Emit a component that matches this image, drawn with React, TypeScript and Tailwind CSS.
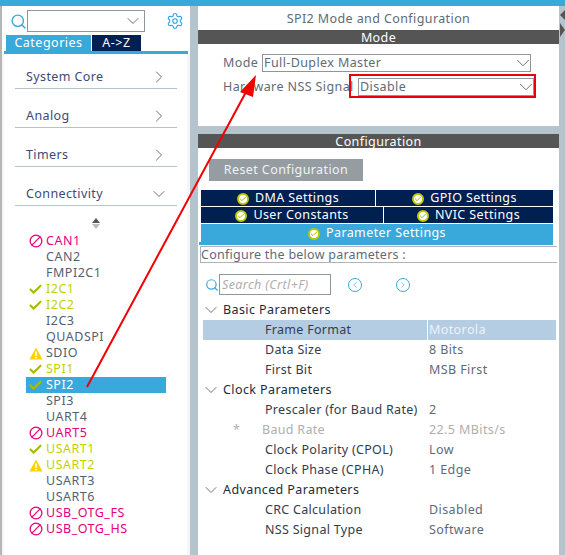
import { ChevronDown, ChevronRight, Search, Settings, Check, Ban, ChevronLeft } from "lucide-react";

const FONT = "font-['Noto_Sans',sans-serif]";

type PeripheralState = "none" | "ok" | "warn" | "ban";

const peripherals: { name: string; state: PeripheralState; color?: string; selected?: boolean }[] = [
  { name: "CAN1", state: "ban", color: "text-[#e6007e]" },
  { name: "CAN2", state: "none" },
  { name: "FMPI2C1", state: "none" },
  { name: "I2C1", state: "ok", color: "text-[#c3d100]" },
  { name: "I2C2", state: "ok", color: "text-[#c3d100]" },
  { name: "I2C3", state: "none" },
  { name: "QUADSPI", state: "none" },
  { name: "SDIO", state: "warn" },
  { name: "SPI1", state: "ok", color: "text-[#c3d100]" },
  { name: "SPI2", state: "ok", color: "text-white", selected: true },
  { name: "SPI3", state: "none" },
  { name: "UART4", state: "none" },
  { name: "UART5", state: "ban", color: "text-[#e6007e]" },
  { name: "USART1", state: "ok", color: "text-[#c3d100]" },
  { name: "USART2", state: "warn", color: "text-[#c3d100]" },
  { name: "USART3", state: "none" },
  { name: "USART6", state: "none" },
  { name: "USB_OTG_FS", state: "ban", color: "text-[#e6007e]" },
  { name: "USB_OTG_HS", state: "ban", color: "text-[#e6007e]" },
];

function StateIcon({ state }: { state: PeripheralState }) {
  if (state === "ok") return <Check size={15} strokeWidth={3.5} className="text-[#a9bd00]" />;
  if (state === "ban") return <Ban size={14} strokeWidth={2.2} className="text-[#e6007e] -scale-x-100" />;
  if (state === "warn")
    return (
      <svg width="14" height="13" viewBox="0 0 14 13">
        <path d="M7 0.5 L13.6 12.5 H0.4 Z" fill="#ffd200" />
        <rect x="6.2" y="4.5" width="1.6" height="4.5" fill="#fff" />
        <rect x="6.2" y="9.8" width="1.6" height="1.6" fill="#fff" />
      </svg>
    );
  return null;
}

function Category({ label, open, className }: { label: string; open?: boolean; className: string }) {
  return (
    <div className={`ml-[11px] w-[162px] border-b border-[#b5c3cc] flex items-center justify-between pl-[11px] pr-[8px] pb-[2px] text-[12.5px] tracking-[0.4px] text-[#3b4a78] ${className}`}>
      <span>{label}</span>
      {open ? (
        <ChevronDown size={20} strokeWidth={1} className="text-[#555] shrink-0 -mt-[2px]" />
      ) : (
        <ChevronRight size={20} strokeWidth={1} className="text-[#555] shrink-0 -mt-[2px]" />
      )}
    </div>
  );
}

function SelectBox({ value, className }: { value: string; className: string }) {
  return (
    <div className={`border border-[#8f959b] flex items-center justify-between pl-[1px] text-[12.5px] tracking-[0.4px] text-[#5f6a78] ${className}`}>
      <span>{value}</span>
      <ChevronDown size={22} strokeWidth={0.9} className="text-[#555] shrink-0 -mr-[4px]" />
    </div>
  );
}

function SettingTab({ label, className }: { label: string; className: string }) {
  return (
    <div className={`flex items-center justify-center gap-[6px] pt-[1px] text-white text-[12.5px] tracking-[0.4px] ${className}`}>
      <span className="w-[12px] h-[12px] rounded-full bg-white border-2 border-[#bcc900] flex items-center justify-center">
        <Check size={8} strokeWidth={3} className="text-[#a9bd00]" />
      </span>
      {label}
    </div>
  );
}

function Group({ label }: { label: string }) {
  return (
    <div className="h-5 flex items-center -ml-[2px] gap-[2px] text-[#222b3a]">
      <ChevronDown size={20} strokeWidth={1} className="text-[#555] shrink-0" />
      <span>{label}</span>
    </div>
  );
}

function ParamRow({ label, value, selected, muted }: { label: string; value: string; selected?: boolean; muted?: boolean }) {
  return (
    <div className={`h-5 flex items-center ${muted ? "text-[#b0aeae]" : "text-[#333c4c]"} ${selected ? "bg-[#b5cde3]" : ""}`}>
      <span className={`w-[224px] ${muted ? "pl-[59px]" : "pl-[62px]"} flex relative tracking-[0.3px]`}>
        {muted && <span className="absolute left-[30px]">*</span>}
        {label}
      </span>
      <span className={`flex-1 h-full flex items-center ${selected ? "border-l border-white pl-[1px] text-[#eef2f6]" : "pl-[2px] text-[#5f6a78]"} ${muted ? "text-[#b0aeae]" : ""}`}>{value}</span>
    </div>
  );
}

export default function App() {
  return (
    <div className={`w-[565px] h-[555px] overflow-hidden relative bg-white ${FONT}`}>
      <div className="h-[6px] bg-[#39a9dc]" />
      <div className="flex h-[549px]">
        {/* left panel */}
        <div className="w-[190px] border-l-2 border-[#b5b5b5] flex flex-col shrink-0">
          <div className="flex items-center h-[29px] pl-[8px] pt-[1px]">
            <Search size={17} strokeWidth={2} className="text-[#39a9dc] shrink-0" />
            <div className="w-[118px] h-[22px] border border-[#8f959b] flex items-center justify-end pr-[1px]">
              <ChevronDown size={20} strokeWidth={1} className="text-[#555]" />
            </div>
            <Settings size={18} strokeWidth={1.6} className="ml-[21px] text-[#39a9dc] shrink-0" />
          </div>
          <div className="flex pl-[4px] h-[16px] text-[12.5px] tracking-[0.5px] text-white">
            <div className="w-[85px] bg-[#39a9dc] text-center leading-[16px]">Categories</div>
            <div className="w-[49px] ml-[1px] bg-[#002052] text-center leading-[16px]">A-&gt;Z</div>
          </div>
          <div className="ml-[2px] w-[184px] h-[3px] bg-[#39a9dc]" />
          <div className="flex-1 bg-[#f6f6f6]">
            <div className="ml-[2px] w-[183px] h-full bg-white">
              <div className="pt-[15px] pb-[1px]">
                <Category label="System Core" className="h-[20px] mb-[19px]" />
                <Category label="Analog" className="h-[20px] mb-[19px]" />
                <Category label="Timers" className="h-[20px] mb-[19px]" />
                <Category label="Connectivity" open className="h-[20px]" />
              </div>
              <div className="ml-[88px] mt-[11px] mb-[4px] flex flex-col items-center w-[8px]">
                <span className="w-0 h-0 border-x-[4px] border-x-transparent border-b-[5px] border-b-[#555]" />
                <span className="mt-[1px] w-0 h-0 border-x-[4px] border-x-transparent border-t-[5px] border-t-[#bbb]" />
              </div>
              <div className="text-[12.5px] tracking-[0.5px] text-[#555f70]">
                {peripherals.map((p) => (
                  <div
                    key={p.name}
                    className={`ml-[22px] w-[140px] h-4 flex items-center ${p.selected ? "bg-[#39a9dc]" : ""} ${p.color ?? ""}`}
                  >
                    <span className="w-[20px] flex justify-center shrink-0 pr-[1px]">
                      <StateIcon state={p.state} />
                    </span>
                    <span>{p.name}</span>
                  </div>
                ))}
              </div>
            </div>
          </div>
        </div>

        {/* splitter */}
        <div className="w-[8px] bg-[#b5c3cc] shrink-0" />

        {/* right panel */}
        <div className="w-[361px] shrink-0 flex flex-col text-[12.5px] tracking-[0.4px]">
          <div className="h-[24px] text-center leading-[26px] text-[#5f6a78]">SPI2 Mode and Configuration</div>
          <div className="h-[14px] bg-[#545554] text-white text-center leading-[16px]">Mode</div>
          <div className="h-[82px] pt-[10px]">
            <div className="flex items-center h-[18px] pl-[25px] text-[#5f6a78]">
              <span className="w-[39px]">Mode</span>
              <SelectBox value="Full-Duplex Master" className="w-[269px] h-[18px]" />
            </div>
            <div className="flex items-center h-[18px] mt-[6px] pl-[25px] text-[#5f6a78]">
              <span className="w-[135px] whitespace-nowrap">Hardware NSS Signal</span>
              <SelectBox value="Disable" className="w-[176px] h-[18px]" />
            </div>
          </div>
          <div className="h-[8px] bg-[#b5c3cc]" />
          <div className="h-[14px] bg-[#545554] text-white text-center leading-[16px]">Configuration</div>
          <div className="pl-[11px] pt-[11px]">
            <div className="w-[154px] h-[22px] pt-[1px] bg-[#959ca2] text-[#f0f2f3] flex items-center justify-center">Reset Configuration</div>
          </div>
          <div className="ml-[3px] mt-[9px] w-[352px] flex flex-col gap-[1px]">
            <div className="flex h-4 gap-[1px]">
              <SettingTab label="DMA Settings" className="w-[174px] bg-[#002052]" />
              <SettingTab label="GPIO Settings" className="flex-1 bg-[#002052]" />
            </div>
            <div className="flex h-4 gap-[1px]">
              <SettingTab label="User Constants" className="w-[182px] bg-[#002052]" />
              <SettingTab label="NVIC Settings" className="flex-1 bg-[#002052]" />
            </div>
            <SettingTab label="Parameter Settings" className="h-[18px] bg-[#39a9dc]" />
          </div>
          <div className="ml-[1px] w-[354px] h-[3px] bg-[#39a9dc]" />
          <div className="ml-[2px] mt-[1px] h-[17px] w-[357px] border-y border-[#b0b4b8] border-l leading-[15px] tracking-[0.25px] text-[#5f6a78]">Configure the below parameters :</div>
          <div className="flex items-center h-[21px] mt-[11px] pl-[7px]">
            <Search size={14} strokeWidth={2} className="text-[#39a9dc] shrink-0" />
            <div className="w-[112px] h-[21px] border border-[#8f959b] italic text-[#b0aeae] leading-[19px] pl-[2px]">Search (Crtl+F)</div>
            <span className="ml-[17px] w-[14px] h-[14px] rounded-full border border-[#39a9dc] flex items-center justify-center">
              <ChevronLeft size={10} strokeWidth={1.5} className="text-[#39a9dc]" />
            </span>
            <span className="ml-[34px] w-[14px] h-[14px] rounded-full border border-[#39a9dc] flex items-center justify-center">
              <ChevronRight size={10} strokeWidth={1.5} className="text-[#39a9dc]" />
            </span>
          </div>
          <div className="mt-[5px] pl-[5px] pr-[3px]">
            <Group label="Basic Parameters" />
            <ParamRow label="Frame Format" value="Motorola" selected />
            <ParamRow label="Data Size" value="8 Bits" />
            <ParamRow label="First Bit" value="MSB First" />
            <Group label="Clock Parameters" />
            <ParamRow label="Prescaler (for Baud Rate)" value="2" />
            <ParamRow label="Baud Rate" value="22.5 MBits/s" muted />
            <ParamRow label="Clock Polarity (CPOL)" value="Low" />
            <ParamRow label="Clock Phase (CPHA)" value="1 Edge" />
            <Group label="Advanced Parameters" />
            <ParamRow label="CRC Calculation" value="Disabled" />
            <ParamRow label="NSS Signal Type" value="Software" />
          </div>
        </div>

        {/* collapse handles */}
        <div className="flex-1 bg-[#b5c3cc] flex flex-col pt-[4px] pl-[1px]">
          <span className="w-0 h-0 border-y-[5px] border-y-transparent border-r-[5px] border-r-[#555]" />
          <span className="mt-[3px] w-0 h-0 border-y-[7px] border-y-transparent border-l-[5px] border-l-[#555]" />
        </div>
      </div>

      {/* annotations drawn over the screenshot */}
      <div className="absolute left-[349px] top-[74px] w-[187px] h-[24px] border-2 border-[#e8000d]" />
      <svg className="absolute inset-0" width="565" height="555" viewBox="0 0 565 555">
        <line x1="87" y1="387" x2="246" y2="92" stroke="#f00000" strokeWidth="2" />
        <path d="M256 75 L240 92 L253 97 Z" fill="#f00000" />
      </svg>
    </div>
  );
}
